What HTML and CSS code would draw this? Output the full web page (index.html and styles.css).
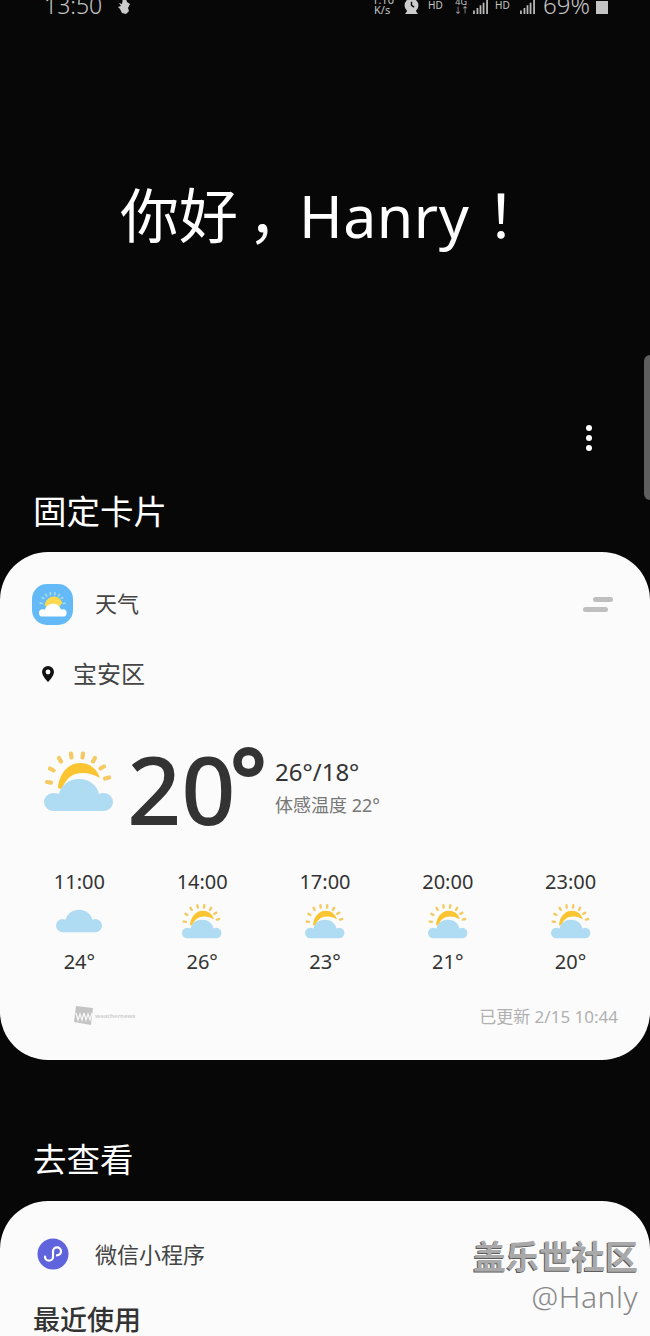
FILE: index.html
```html
<!DOCTYPE html>
<html lang="zh-CN">
<head>
  <meta charset="UTF-8">
  <title>你好，Hanry！</title>
  <link rel="stylesheet" href="styles.css">
</head>
<body>

  <svg class="defs" width="0" height="0">
    <symbol id="cloud" viewBox="0 0 70 34">
      <path d="M10 34a10 10 0 0 1 0-20c1.600 0 3 .3 4.500 1C17 6 25 0 35 0s18 6 20.500 15c1.500-.7 3-1 4.500-1a10 10 0 0 1 0 20z" fill="#b0dcf3"/>
    </symbol>
    <symbol id="sun-cloud" viewBox="0 0 70 62">
      <g stroke="#f5ca62" stroke-width="4.200" stroke-linecap="round">
        <path d="M3 32l4 .6M6 18.500l3.500 2M15 8l2 3.500M27 3.500l.5 4M39 3.500l-.5 4M51 8l-2 3.500M60 16.500l-3.500 2M65 27.500l-4 1"/>
      </g>
      <path d="M14 38C15 24 24 13 36 13c10 0 17 6 20 15-5-3-11-5-17-5-11 0-16 5-21 15-1 1-3 1-4 0z" fill="#fbc531"/>
      <path d="M9 61a9 9 0 0 1 0-18c2 0 4 .4 6 1C17 35 25 29 35 29s18 6 20 15c1.500-.6 3-1 5-1a9 9 0 0 1 0 18z" fill="#b0dcf3"/>
    </symbol>
    <symbol id="signal" viewBox="0 0 17 16">
      <path d="M0 12h2v4H0zM4 9h2v7H4zM7.500 6h2v10h-2zM11 3h2v13h-2zM15 0h2v16h-2z" fill="#bbb"/>
    </symbol>
  </svg>

  <div class="status-bar">
    <div class="status-left">
      <span class="clock">13:50</span>
      <svg class="status-hand" viewBox="0 0 14 16"><path d="M6 0l3 1 1 3 3 2-2 4 1 3-3 3-4-1-2-4-2-2 3-1-2-3 3 1z" fill="#ccc"/></svg>
    </div>
    <div class="status-right">
      <span class="speed">1.10<br>K/s</span>
      <svg class="status-alarm" viewBox="0 0 14 15"><circle cx="7" cy="7" r="6.500" fill="#ccc"/><path d="M7 3.500V7l2.500 1.500" stroke="#070707" stroke-width="1.300" fill="none"/><path d="M1 15l2-3h8l2 3z" fill="#ccc"/></svg>
      <span class="hd">HD</span>
      <span class="net first">
        <span class="net-type">4G</span>
        <span class="net-arrows">↓↑</span>
      </span>
      <svg class="status-signal"><use href="#signal"/></svg>
      <span class="hd second">HD</span>
      <span class="net">
        <span class="net-type">4G</span>
        <svg class="status-signal"><use href="#signal"/></svg>
      </span>
      <span class="battery-text">69%</span>
      <span class="battery"></span>
    </div>
  </div>

  <h1 class="greeting">你好<span class="comma">，</span><span class="name">Hanry</span><span class="bang">！</span></h1>

  <div class="menu-row">
    <div class="dots"><i></i><i></i><i></i></div>
  </div>

  <h2 class="section-title">固定卡片</h2>

  <div class="card weather-card">
    <div class="card-head">
      <div class="app-icon">
        <svg viewBox="0 0 70 62" width="28" height="25">
          <g stroke="#a5dbe6" stroke-width="4" stroke-linecap="round">
            <path d="M3 27.500l5 1.200M8 13.500l4.500 2.500M17 5.500l2.500 4.500M28 1.500l.6 5M40 1.500l-.6 5M51 5.500l-2.500 4.500M60 13.500l-4.500 2.500M65 27.500l-5 1.200"/>
          </g>
          <path d="M14 33C17 20 25 11 36 11c10 0 18 5 22 16l-8 10H20z" fill="#fcd94f"/>
          <path d="M9 61a9 9 0 0 1 0-18c2 0 4 .4 6 1C17 35 25 29 35 29s18 6 20 15c1.500-.6 3-1 5-1a9 9 0 0 1 0 18z" fill="#fff"/>
        </svg>
      </div>
      <span class="app-name">天气</span>
      <div class="collapse"><i></i><i></i></div>
    </div>

    <div class="location">
      <svg class="pin" viewBox="0 0 12 16"><path d="M6 0a6 6 0 0 1 6 6c0 4-6 10-6 10S0 10 0 6a6 6 0 0 1 6-6z" fill="#111"/><circle cx="6" cy="6" r="2.400" fill="#fbfbfb"/></svg>
      <span>宝安区</span>
    </div>

    <div class="now">
      <svg class="now-icon"><use href="#sun-cloud"/></svg>
      <div class="now-temp">20<span class="deg">°</span></div>
      <div class="now-side">
        <div class="range">26°/18°</div>
        <div class="feels">体感温度 22°</div>
      </div>
    </div>

    <div class="hours">
      <div class="hour"><span>11:00</span><svg class="hour-cloud"><use href="#cloud"/></svg><span>24°</span></div>
      <div class="hour"><span>14:00</span><svg class="hour-icon"><use href="#sun-cloud"/></svg><span>26°</span></div>
      <div class="hour"><span>17:00</span><svg class="hour-icon"><use href="#sun-cloud"/></svg><span>23°</span></div>
      <div class="hour"><span>20:00</span><svg class="hour-icon"><use href="#sun-cloud"/></svg><span>21°</span></div>
      <div class="hour"><span>23:00</span><svg class="hour-icon"><use href="#sun-cloud"/></svg><span>20°</span></div>
    </div>

    <div class="card-foot">
      <div class="brand">
        <svg class="brand-mark" viewBox="0 0 19 19"><path d="M2 0l17 2-2 17-17-3z" fill="#c4c4c4"/><path d="M2 7l2 7 2-6 2 6 2-7M10 7l2 7 2-6 2 6 2-7" stroke="#fbfbfb" stroke-width="1.200" fill="none"/></svg>
        <span>weathernews</span>
      </div>
      <span class="updated">已更新 2/15 10:44</span>
    </div>
  </div>

  <h2 class="section-title second">去查看</h2>

  <div class="card mini-card">
    <div class="card-head">
      <div class="mini-icon">
        <svg viewBox="0 0 32 32" width="32" height="32"><circle cx="16" cy="16" r="15.500" fill="#5f63dc"/><path d="M9.500 18.500c0 2.500 1.800 4.200 4 4.200s4-1.800 4-4v-5.400c0-2.200 1.800-4 4-4s4 1.700 4 4-2 3.800-4 4" transform="translate(-1.500 0)" stroke="#fff" stroke-width="2.200" fill="none" stroke-linecap="round"/></svg>
      </div>
      <span class="app-name">微信小程序</span>
    </div>
    <div class="recent">最近使用</div>
  </div>

  <div class="watermark">
    <div class="wm-title">盖乐世社区</div>
    <div class="wm-user">@Hanly</div>
  </div>

  <div class="side-handle"></div>

</body>
</html>
```

FILE: styles.css
```css
* {
  box-sizing: border-box;
}
html, body {
  margin: 0;
  height: 1336px;
  overflow: hidden;
}
body {
  position: relative;
  background: #070707;
  color: #fff;
  font-family: "Noto Sans", "Noto Sans CJK SC", sans-serif;
}
.defs {
  position: absolute;
}

/* status bar, cut off at the top of the shot */
.status-bar {
  height: 16px;
  padding: 0 42px 2px 44px;
  display: flex;
  justify-content: space-between;
  align-items: flex-end;
  overflow: hidden;
  color: #c4c4c4;
}
.status-left, .status-right {
  display: flex;
  align-items: flex-end;
}
.clock {
  font-size: 23px;
  line-height: 24px;
  margin-bottom: -3px;
  font-weight: 300;
}
.status-hand {
  width: 14px;
  height: 16px;
  margin-left: 15px;
}
.speed {
  width: 20px;
  font-size: 11px;
  line-height: 10px;
  text-align: center;
  margin-bottom: -1px;
}
.status-alarm {
  width: 17px;
  height: 16px;
  margin-left: 11px;
}
.hd {
  width: 15px;
  font-size: 10px;
  line-height: 10px;
  margin: 0 0 4px 8px;
}
.hd.second {
  margin-left: 6px;
}
.net {
  display: flex;
  flex-direction: column;
  align-items: center;
  margin-left: 9px;
  font-size: 9px;
  line-height: 8px;
  width: 17px;
}
.net.first {
  width: 14px;
  margin-left: 11px;
  margin-right: 4px;
}
.net-arrows {
  font-size: 8px;
  letter-spacing: -1px;
}
.status-signal {
  width: 17px;
  height: 14px;
}
.battery-text {
  font-size: 24px;
  line-height: 24px;
  font-weight: 300;
  margin: 0 0 -3px 7px;
}
.battery {
  width: 12px;
  height: 13px;
  background: #c4c4c4;
  margin-left: 6px;
}

.greeting {
  margin: 0;
  padding: 157px 0 0 120px;
  font-size: 59px;
  line-height: 84px;
  font-weight: 400;
  white-space: nowrap;
}
.comma {
  display: inline-block;
  width: 51px;
  margin-left: 10px;
}
.name {
  letter-spacing: .5px;
}
.bang {
  margin-left: 17px;
}

.menu-row {
  height: 26px;
  margin-top: 168px;
  padding-right: 58px;
  display: flex;
  justify-content: flex-end;
}
.dots {
  display: flex;
  flex-direction: column;
  gap: 4px;
}
.dots i {
  width: 6px;
  height: 6px;
  border-radius: 50%;
  background: #fff;
}

.section-title {
  margin: 0;
  padding: 36px 0 0 33px;
  font-size: 33.500px;
  line-height: 48px;
  font-weight: 400;
  height: 101px;
}
.section-title.second {
  padding-top: 75px;
  height: 141px;
}

.card {
  background: #fbfbfb;
  color: #333;
  border-radius: 48px;
}
.weather-card {
  height: 508px;
  padding-top: 30px;
}
.mini-card {
  height: 135px;
  border-radius: 48px 48px 0 0;
  padding-top: 32px;
  overflow: hidden;
}
.card-head {
  height: 40px;
  padding: 0 37px 0 32px;
  display: flex;
  align-items: center;
}
.app-icon {
  width: 41px;
  height: 41px;
  margin-top: 4px;
  border-radius: 15px;
  background: #64b9f7;
  display: flex;
  align-items: center;
  justify-content: center;
}
.app-name {
  margin-left: 22px;
  font-size: 22px;
  color: #444;
}
.collapse {
  margin: 4px 0 0 auto;
  display: flex;
  flex-direction: column;
  align-items: flex-end;
  gap: 5px;
}
.collapse i {
  height: 5px;
  border-radius: 3px;
  background: #bfbfbf;
}
.collapse i:first-child {
  width: 20px;
}
.collapse i:last-child {
  width: 25px;
  margin-right: 5px;
}

.location {
  margin-top: 34px;
  height: 32px;
  padding-left: 42px;
  display: flex;
  align-items: center;
  font-size: 24px;
  color: #444;
}
.pin {
  width: 12px;
  height: 16px;
  margin: 3px 19px 0 0;
}

.now {
  margin-top: 49px;
  height: 96px;
  padding-left: 44px;
  display: flex;
  align-items: center;
}
.now-icon {
  width: 70px;
  height: 62px;
  margin-bottom: 8px;
}
.now-temp {
  margin: -5px 0 0 13px;
  font-size: 95px;
  line-height: 96px;
  font-weight: 500;
  color: #333;
  width: 148px;
  white-space: nowrap;
}
.deg {
  font-size: 88px;
  font-weight: 700;
  vertical-align: 14px;
  margin-left: -6px;
}
.now-side {
  padding-top: 3px;
}
.range {
  font-size: 24px;
  line-height: 32px;
}
.feels {
  margin-top: 4px;
  font-size: 18px;
  line-height: 26px;
  color: #777;
}

.hours {
  margin-top: 36px;
  padding: 0 18px;
  display: grid;
  grid-template-columns: repeat(5, 1fr);
}
.hour {
  display: flex;
  flex-direction: column;
  align-items: center;
  font-size: 20px;
  line-height: 26px;
  color: #333;
}
.hour-icon {
  width: 40px;
  height: 36px;
  margin-top: 8px;
  margin-bottom: 10px;
}
.hour-cloud {
  width: 46px;
  height: 26px;
  margin-top: 13px;
  margin-bottom: 15px;
}

.card-foot {
  margin-top: 28px;
  padding: 0 32px 0 74px;
  display: flex;
  justify-content: space-between;
  align-items: center;
}
.brand {
  display: flex;
  align-items: center;
  gap: 2px;
  font-size: 6px;
  font-weight: 700;
  color: #cfcfcf;
}
.brand-mark {
  width: 19px;
  height: 19px;
}
.updated {
  font-size: 17px;
  color: #b0b0b0;
}

.mini-icon {
  width: 41px;
  height: 41px;
  margin-top: 2px;
  display: flex;
  align-items: center;
  justify-content: center;
}
.recent {
  margin-top: 27px;
  padding-left: 33px;
  font-size: 27px;
  line-height: 40px;
  font-weight: 500;
  color: #333;
}

.watermark {
  position: absolute;
  right: 12px;
  top: 1235px;
  text-align: right;
  color: #a9a9a9;
}
.wm-title {
  font-size: 33px;
  line-height: 44px;
  font-weight: 700;
  text-shadow: -1px 1px 0 #5c5c5c;
}
.wm-user {
  font-size: 30px;
  line-height: 36px;
  font-weight: 300;
  color: #888;
  letter-spacing: .5px;
}

.side-handle {
  position: absolute;
  right: 0;
  top: 355px;
  width: 6px;
  height: 145px;
  border-radius: 6px 0 0 6px;
  background: #5e5e5e;
}
```
